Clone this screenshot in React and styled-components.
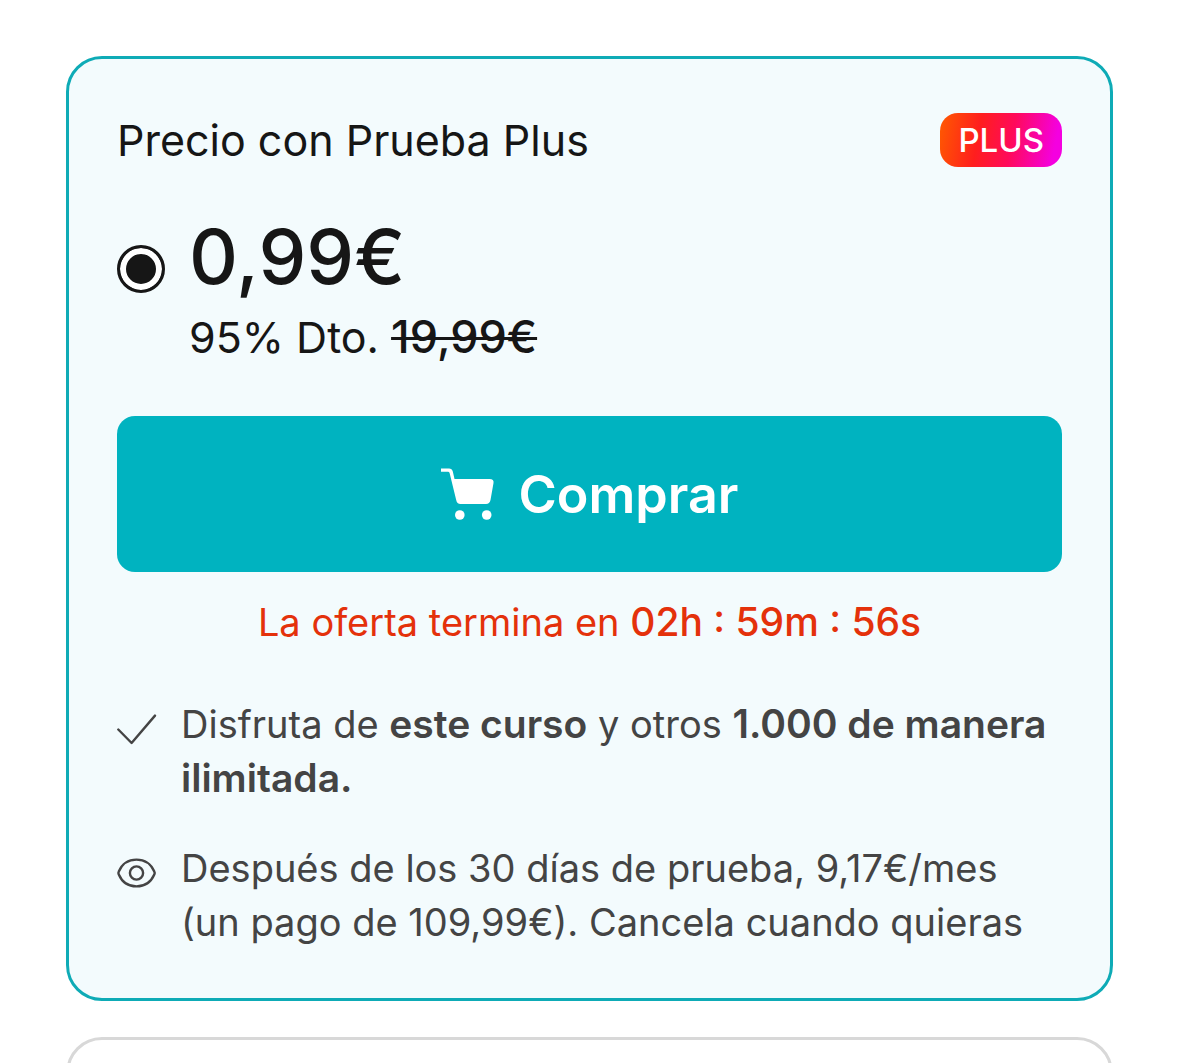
import React from 'react';
import styled, { createGlobalStyle } from 'styled-components';

const GlobalStyle = createGlobalStyle`
  * {
    box-sizing: border-box;
  }

  body {
    margin: 0;
    background: #fff;
    color: #161616;
    font-family: Inter, "Liberation Sans", sans-serif;
  }
`;

const Page = styled.main`
  display: flex;
  flex-direction: column;
  gap: 36px;
  padding: 56px 66px 0;
`;

const Card = styled.section`
  min-height: 240px;
  padding: 54px 48px 49px;
  border: 3px solid ${({ $active }) => ($active ? '#0eabb6' : '#d8d8d8')};
  border-radius: 36px;
  background: ${({ $active }) => ($active ? '#f3fbfd' : '#fff')};
`;

const Header = styled.header`
  display: flex;
  justify-content: space-between;
  align-items: center;
`;

const Title = styled.h2`
  margin: 0;
  font-size: 43px;
  font-weight: 400;
  line-height: 54px;
`;

const Badge = styled.span`
  padding: 0 18px;
  border-radius: 18px;
  background: linear-gradient(100deg, #ff5a00 0%, #ff1e1e 32%, #ff0a5a 58%, #f400e0 92%);
  color: #fff;
  font-size: 33px;
  font-weight: 500;
  line-height: 54px;
`;

const Option = styled.label`
  display: flex;
  align-items: flex-start;
  gap: 24px;
  margin-top: 44px;
`;

const Radio = styled.input`
  appearance: none;
  flex: none;
  width: 48px;
  height: 48px;
  margin: 34px 0 0;
  border: 3px solid #161616;
  border-radius: 50%;
  background: #fff;

  &:checked {
    background: #161616;
    box-shadow: inset 0 0 0 6px #fff;
  }
`;

const Price = styled.strong`
  display: block;
  font-size: 76px;
  font-weight: 500;
  line-height: 90px;
`;

const Discount = styled.span`
  display: block;
  margin-top: 9px;
  font-size: 43px;
  line-height: 54px;
`;

const OldPrice = styled.s`
  font-size: 45px;
  font-weight: 500;
  text-decoration-thickness: 3px;
`;

const BuyButton = styled.button`
  display: flex;
  justify-content: center;
  align-items: center;
  gap: 24px;
  width: 100%;
  height: 156px;
  margin-top: 52px;
  border: 0;
  border-radius: 18px;
  background: #00b3c0;
  color: #fff;
  font-family: inherit;
  font-size: 52px;
  font-weight: 600;
  cursor: pointer;
`;

const Offer = styled.p`
  margin: 23px 0 0;
  color: #e4310b;
  font-size: 38px;
  line-height: 54px;
  text-align: center;

  strong {
    font-size: 39px;
    font-weight: 500;
  }
`;

const Features = styled.ul`
  display: grid;
  gap: 36px;
  margin: 48px 0 0;
  padding: 0;
  list-style: none;
`;

const Feature = styled.li`
  display: flex;
  gap: 24px;
  color: #444;
  font-size: 38px;
  line-height: 54px;

  svg {
    flex: none;
    margin-top: 12px;
  }

  strong {
    font-size: 39px;
    font-weight: 600;
  }
`;

const CartIcon = () => (
    <svg width="54" height="54" viewBox="0 0 54 54" fill="none" aria-hidden="true">
        <path d="M0 1.400h8q3 0 3.800 3L13.500 12h35q4.700 0 4 4l-3 17q-.8 4-4.500 4H19.500q-3.600 0-4.300-4L8.600 6q-.4-1.200-1.600-1.200H0z" fill="#fff" />
        <circle cx="18.800" cy="48" r="4.800" fill="#fff" />
        <circle cx="45.700" cy="48" r="4.800" fill="#fff" />
    </svg>
);

const CheckIcon = () => (
    <svg width="40" height="40" viewBox="0 0 40 40" fill="none" stroke="#444" strokeWidth="2.400" strokeLinecap="round" strokeLinejoin="round" aria-hidden="true">
        <path d="M1.300 20.500 14.600 34 38 6.600" />
    </svg>
);

const EyeIcon = () => (
    <svg width="40" height="40" viewBox="0 0 40 40" fill="none" stroke="#444" strokeWidth="2.400" strokeLinejoin="round" aria-hidden="true">
        <path d="M1.800 18.500C5 11 11.500 6.600 19.500 6.600S34 11 37.300 18.500Q38 20 37.300 21.500C34 29 27.500 33.400 19.500 33.400S5 29 1.800 21.500Q1.100 20 1.800 18.500z" />
        <circle cx="19.500" cy="20" r="6.600" />
    </svg>
);

const App = () => {
    return (
        <>
            <GlobalStyle />
            <Page>
                <Card $active>
                    <Header>
                        <Title>Precio con Prueba Plus</Title>
                        <Badge>PLUS</Badge>
                    </Header>

                    <Option>
                        <Radio type="radio" name="plan" defaultChecked />
                        <span>
                            <Price>0,99€</Price>
                            <Discount>95% Dto. <OldPrice>19,99€</OldPrice></Discount>
                        </span>
                    </Option>

                    <BuyButton type="button">
                        <CartIcon />
                        Comprar
                    </BuyButton>
                    <Offer>La oferta termina en <strong>02h : 59m : 56s</strong></Offer>

                    <Features>
                        <Feature>
                            <CheckIcon />
                            <span>Disfruta de <strong>este curso</strong> y otros <strong>1.000 de manera ilimitada.</strong></span>
                        </Feature>
                        <Feature>
                            <EyeIcon />
                            <span>Después de los 30 días de prueba, 9,17€/mes (un pago de 109,99€). Cancela cuando quieras</span>
                        </Feature>
                    </Features>
                </Card>
                <Card />
            </Page>
        </>
    );
};

export default App;
